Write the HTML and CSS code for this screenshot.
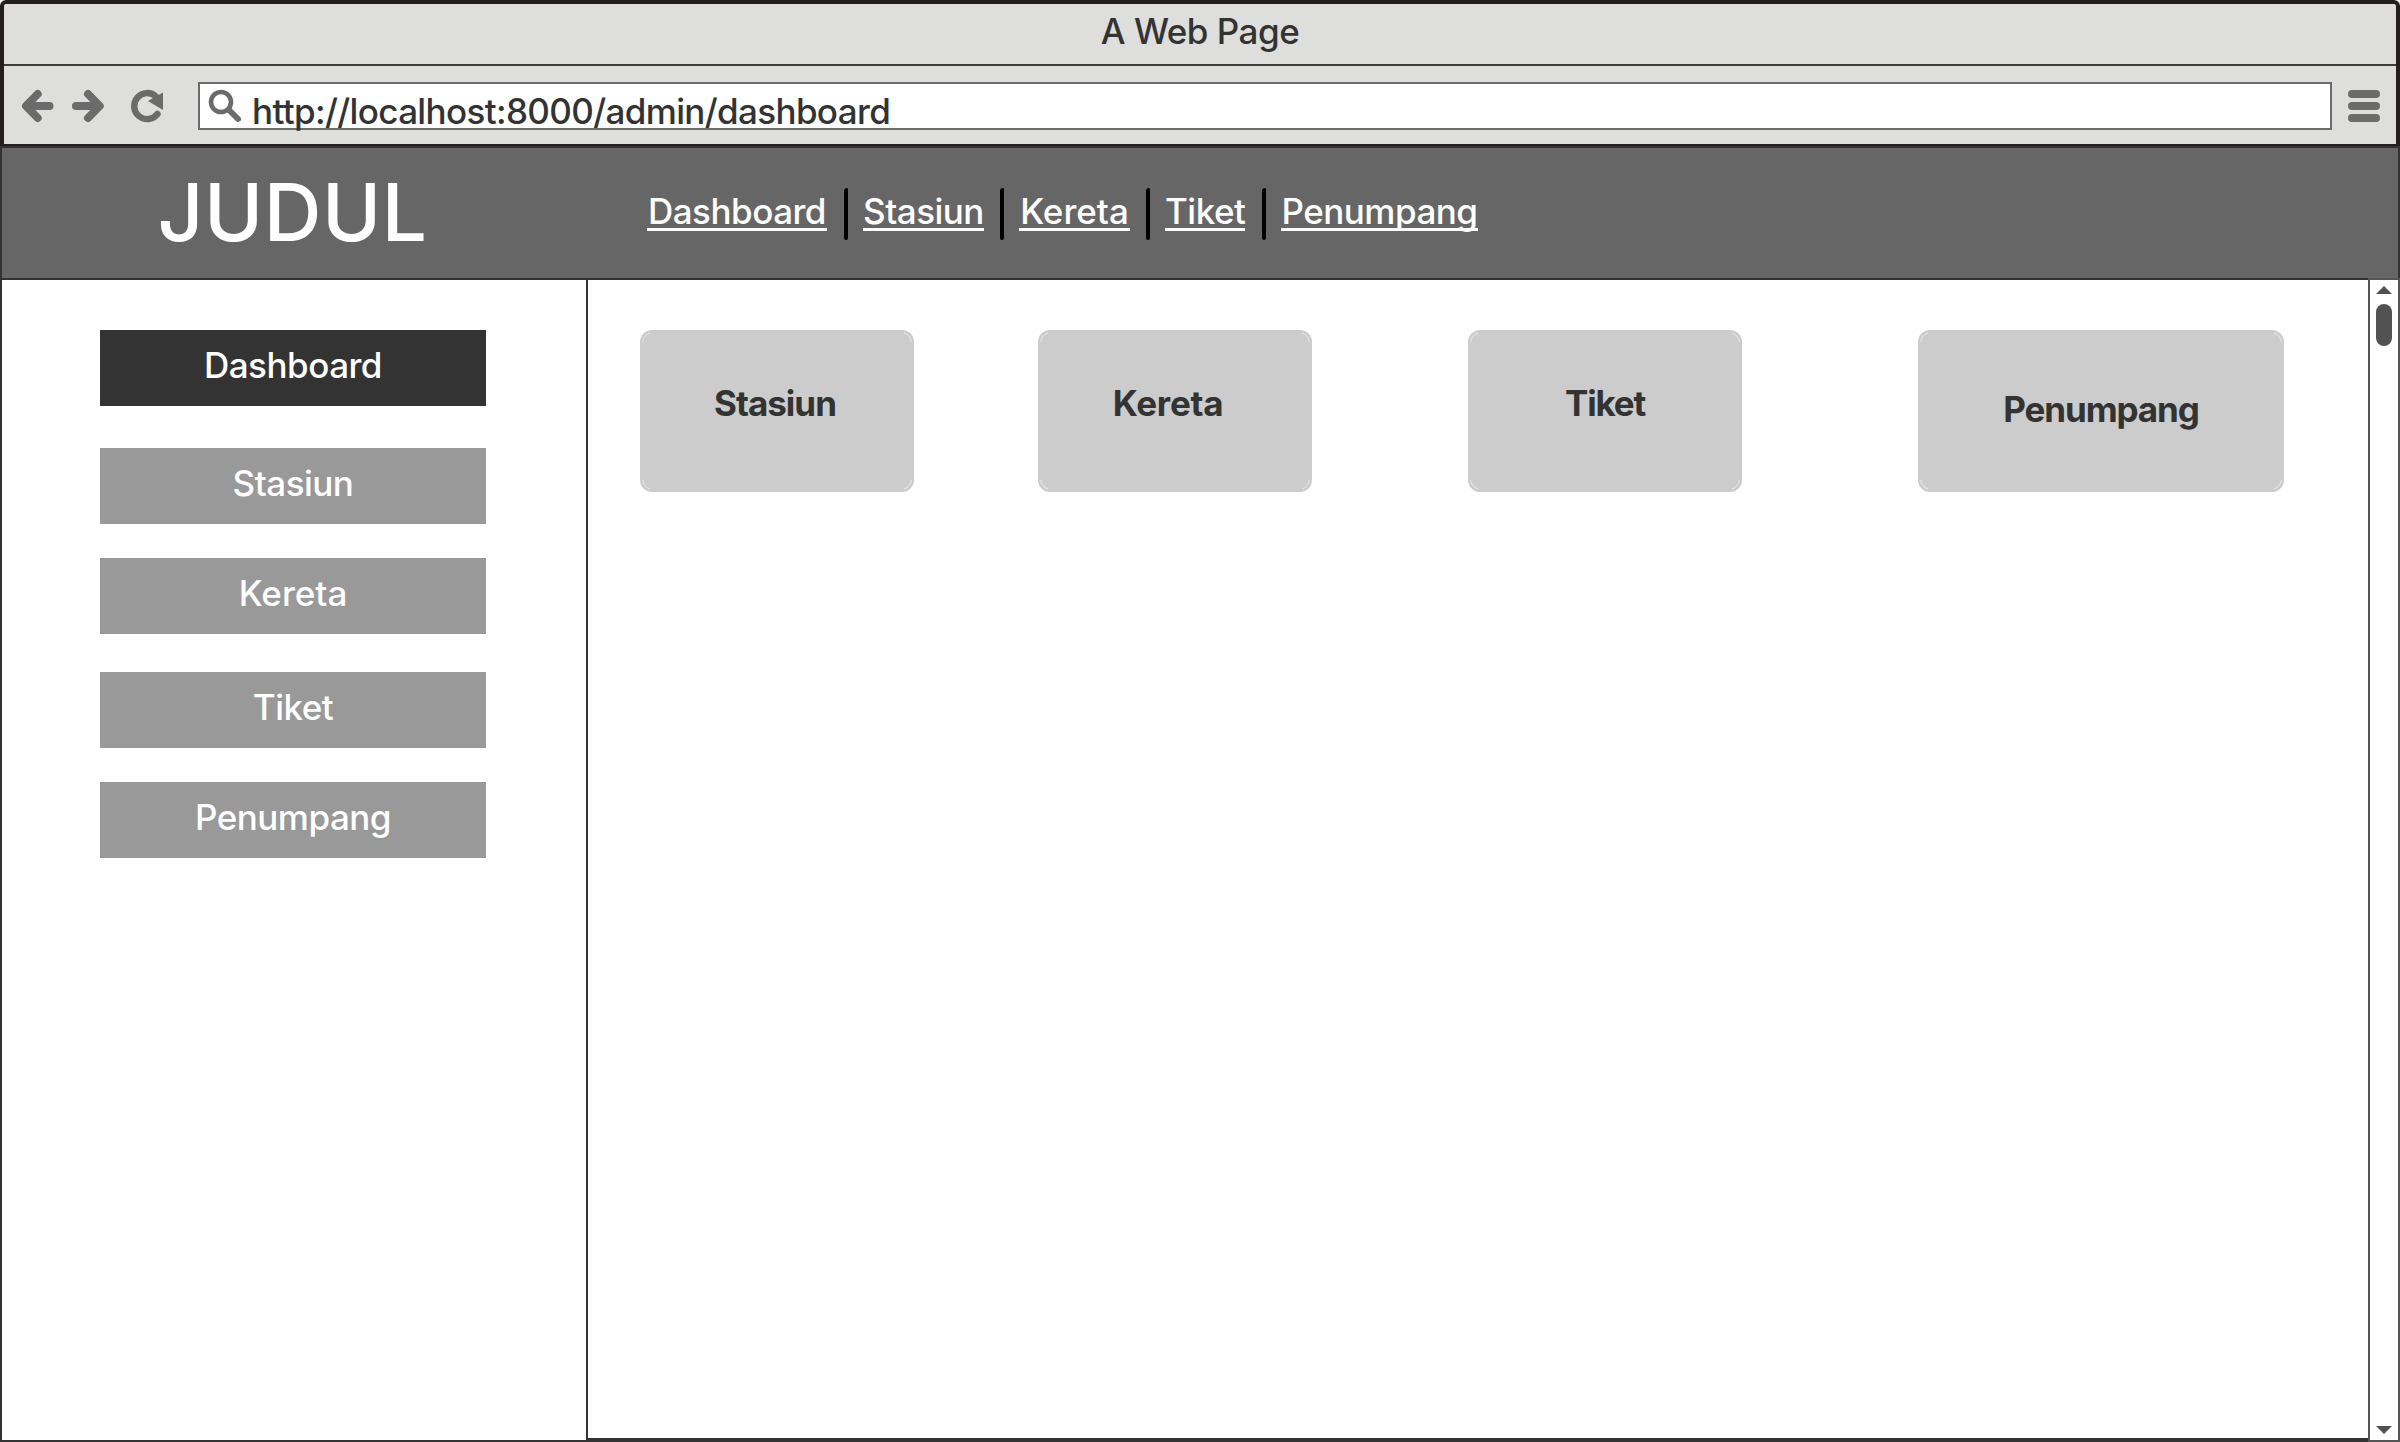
FILE: index.html
```
<!DOCTYPE html>
<html lang="id">
<head>
<meta charset="utf-8">
<title>A Web Page</title>
<link rel="stylesheet" href="styles.css">
</head>
<body>
<div class="window">
  <header class="chrome">
    <div class="titlebar">A Web Page</div>
    <div class="toolbar">
      <svg class="nav-icons" width="192" height="48" viewBox="4 82 192 48">
        <g fill="none" stroke="#6b6b6b" stroke-width="8" stroke-linecap="round" stroke-linejoin="round">
          <path d="M37.700 94 26 106l11.700 12M27 106h22.500"/>
          <path d="M88 94l11.700 12L88 118M98.500 106H76"/>
        </g>
        <path d="M34 98v16l-6-8zM92 98v16l6-8z" fill="#6b6b6b"/>
        <path d="M157.500 114A13 13 0 1 1 156 96.500" fill="none" stroke="#6b6b6b" stroke-width="6.400" stroke-linecap="round"/>
        <path d="M163 92.500V110L148 101Z" fill="#6b6b6b"/>
      </svg>
      <div class="address">
        <svg class="search" width="52" height="44" viewBox="200 84 52 44" fill="none" stroke="#6b6b6b">
          <circle cx="221" cy="102" r="10" stroke-width="4.600"/>
          <path d="M229 110l9 9" stroke-width="6" stroke-linecap="round"/>
        </svg>
        <span class="url">http://localhost:8000/admin/dashboard</span>
      </div>
      <div class="menu"><i></i><i></i><i></i></div>
    </div>
  </header>
  <div class="page">
    <div class="banner">
      <h1 class="logo">JUDUL</h1>
      <nav class="topnav">
        <a class="dashboard">Dashboard</a><i></i><a class="stasiun">Stasiun</a><i></i><a class="kereta">Kereta</a><i></i><a class="tiket">Tiket</a><i></i><a class="penumpang">Penumpang</a>
      </nav>
    </div>
    <div class="body">
      <aside class="sidebar">
        <a class="item active">Dashboard</a>
        <a class="item">Stasiun</a>
        <a class="item item-kereta">Kereta</a>
        <a class="item">Tiket</a>
        <a class="item">Penumpang</a>
      </aside>
      <main class="content">
        <div class="card card-stasiun">Stasiun</div>
        <div class="card card-kereta">Kereta</div>
        <div class="card card-tiket">Tiket</div>
        <div class="card card-penumpang">Penumpang</div>
      </main>
      <div class="scrollbar">
        <svg width="16" height="8" viewBox="0 0 16 8"><path d="M8 0l8 8H0z" fill="#525252"/></svg>
        <div class="thumb"></div>
        <svg class="down" width="16" height="8" viewBox="0 0 16 8"><path d="M8 8l8-8H0z" fill="#525252"/></svg>
      </div>
    </div>
  </div>
</div>
</body>
</html>
```
FILE: styles.css
```
* { box-sizing: border-box; }
body { margin: 0; background: #fff; color: #333; font: 500 35px Inter, sans-serif; letter-spacing: -0.5px; }

.window { display: flex; flex-direction: column; width: 2400px; height: 1442px; overflow: hidden; }
.chrome { flex: none; height: 146px; background: #dededc; border: 4px solid #231f20; border-bottom-width: 2px; border-radius: 6px 6px 0 0; }
.titlebar { height: 62px; border-bottom: 2px solid #3d3d3d; text-align: center; line-height: 54px; }
.toolbar { display: flex; padding-top: 16px; }
.nav-icons { flex: none; margin-right: 2px; }
.address { display: flex; width: 2134px; height: 48px; background: #fff; border: 2px solid #6b6b6b; }
.search { flex: none; }
.url { line-height: 54px; letter-spacing: -0.64px; white-space: nowrap; }
.menu { display: flex; flex-direction: column; gap: 4px; width: 32px; margin: 8px 0 0 16px; }
.menu i { height: 8px; border-radius: 4px; background: #6b6b6b; }

.page { display: flex; flex-direction: column; flex: 1; border: 2px solid #333; border-bottom: 0; }
.banner { display: flex; flex: none; height: 132px; background: #666; border-bottom: 2px solid #333; color: #fff; }
.logo { width: 584px; margin: 0; padding-right: 3px; font-size: 80px; font-weight: 500; letter-spacing: 0.5px; line-height: 128px; text-align: center; }
.topnav { display: flex; padding: 40px 0 0 61px; }
.topnav a { height: 37px; margin-top: 6px; border-bottom: 3px solid #fff; line-height: 34px; text-align: center; white-space: nowrap; }
.topnav i { width: 4px; height: 52px; margin: 0 15px 0 16px; background: #000; border-radius: 3px 1px 2px 2px; }
.topnav .dashboard { width: 180px; margin-right: 1px; }
.topnav .stasiun { width: 121px; }
.topnav .kereta { width: 111px; letter-spacing: 0; }
.topnav .tiket { width: 80px; margin-right: 1px; }
.topnav .penumpang { width: 197px; }

.body { display: flex; flex: 1; margin-right: -2px; }
.sidebar { display: flex; flex: none; flex-direction: column; width: 584px; padding: 50px 100px 0 98px; border-bottom: 2px solid #333; }
.item { height: 76px; margin-bottom: 34px; background: #999; color: #fff; line-height: 70px; text-align: center; }
.item.active { margin-bottom: 42px; background: #333; }
.item-kereta { margin-bottom: 38px; letter-spacing: 0; }

.content { display: flex; flex: 1; align-items: flex-start; padding: 50px 0 0 52px; border-left: 2px solid #333; border-bottom: 4px solid #333; }
.card { position: relative; flex: none; width: 274px; height: 162px; border-radius: 12px; background: #ccc; font-weight: 700; line-height: 146px; text-align: center; }
.card::after {
  content: ""; position: absolute; inset: 2px; border: 1px solid #ececec; border-radius: 11px;
  --corner: linear-gradient(#000, #000);
  mask: var(--corner) 0 0 / 8px 10px no-repeat, var(--corner) 100% 0 / 8px 10px no-repeat, var(--corner) 0 100% / 8px 10px no-repeat, var(--corner) 100% 100% / 8px 10px no-repeat;
}
.card-stasiun { margin-right: 124px; padding-right: 4px; letter-spacing: -1px; }
.card-kereta { margin-right: 156px; padding-right: 14px; letter-spacing: -0.3px; }
.card-tiket { margin-right: 176px; letter-spacing: -1.2px; }
.card-penumpang { width: 366px; letter-spacing: -1.1px; line-height: 158px; }

.scrollbar { display: flex; flex: none; flex-direction: column; align-items: center; width: 32px; margin-top: -2px; padding: 6px 0; border: 2px solid #555; }
.thumb { width: 16px; height: 42px; margin-top: 10px; border-radius: 8px; background: #525252; }
.down { margin-top: auto; }
```
